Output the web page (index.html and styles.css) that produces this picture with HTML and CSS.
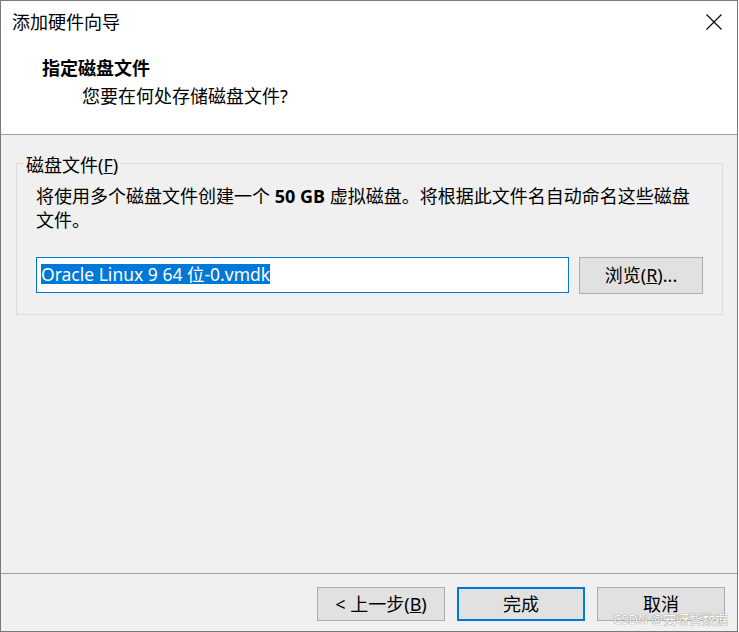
FILE: index.html
```html
<!DOCTYPE html>
<html lang="zh-CN"><head><meta charset="utf-8">
<title>添加硬件向导</title>
<link rel="stylesheet" href="styles.css">
</head><body>
<div class="window">
  <div class="header">
    <div class="titlebar">
      <span class="title">添加硬件向导</span>
      <svg class="close" viewBox="0 0 16 16" width="16" height="16">
        <path d="M0.5 0.5 L15.5 15.5 M15.5 0.5 L0.5 15.5" stroke="#000" stroke-width="1.1" fill="none"/>
      </svg>
    </div>
    <h1>指定磁盘文件</h1>
    <p class="subtitle">您要在何处存储磁盘文件?</p>
  </div>

  <div class="content">
    <fieldset class="group">
      <legend>磁盘文件(<u>F</u>)</legend>
      <p class="desc">将使用多个磁盘文件创建一个 <b>50 GB</b> 虚拟磁盘。将根据此文件名自动命名这些磁盘<br>文件。</p>
      <div class="file-row">
        <div class="field"><span class="sel">Oracle Linux 9 64 位-0.vmdk</span></div>
        <button class="btn browse">浏览(<u>R</u>)...</button>
      </div>
    </fieldset>
  </div>

  <div class="footer">
    <button class="btn">&lt; 上一步(<u>B</u>)</button>
    <button class="btn default">完成</button>
    <button class="btn">取消</button>
  </div>

  <div class="watermark">CSDN @安呀智数据</div>
</div>
</body></html>
```

FILE: styles.css
```css
body {
  margin: 0;
  background: #fff;
  font-family: "Noto Sans", "Noto Sans CJK SC", sans-serif;
  font-size: 18px;
  color: #000;
}
.window {
  position: relative;
  box-sizing: border-box;
  width: 738px;
  height: 632px;
  border: 1px solid #7a7a7a;
  display: flex;
  flex-direction: column;
  background: #f0f0f0;
}
.header {
  flex: none;
  height: 133px;
  background: #fff;
  border-bottom: 1px solid #a0a0a0;
}
.titlebar {
  height: 42px;
  display: flex;
  align-items: center;
  justify-content: space-between;
  padding: 0 15px 0 11px;
}
.title {
  line-height: 24px;
}
.close {
  display: block;
}
h1 {
  margin: 11px 0 0 41px;
  font-size: 18px;
  line-height: 28px;
  font-weight: bold;
}
.subtitle {
  margin: 0 0 0 81px;
  line-height: 28px;
}
.content {
  flex: 1;
  padding: 16px 14px 0 15px;
}
.group {
  margin: 0;
  padding: 9px 19px 20px;
  border: 1px solid #dcdcdc;
}
legend {
  margin-left: -12px;
  padding: 4px 2px 0;
  line-height: 20px;
}
.desc {
  margin: 0;
  line-height: 24px;
}
.file-row {
  display: flex;
  gap: 10px;
  margin-top: 25px;
}
.field {
  box-sizing: border-box;
  width: 533px;
  height: 36px;
  padding: 4px 0 0 4px;
  background: #fff;
  border: 1px solid #0078d7;
  font-size: 17.5px;
}
.sel {
  display: inline-block;
  line-height: 20px;
  background: #0078d7;
  color: #fff;
}
.btn {
  box-sizing: border-box;
  width: 128px;
  height: 34px;
  padding: 0 0 3px;
  font-family: inherit;
  font-size: 18px;
  color: #000;
  background: #e1e1e1;
  border: 1px solid #adadad;
}
.browse {
  width: 124px;
  height: 37px;
}
.footer {
  flex: none;
  height: 58px;
  border-top: 1px solid #a0a0a0;
  display: flex;
  justify-content: flex-end;
  gap: 12px;
  padding: 13px 12px 0 0;
  box-sizing: border-box;
}
.default {
  border: 2px solid #0078d7;
}
.watermark {
  position: absolute;
  right: 9px;
  bottom: 4px;
  font-size: 13px;
  line-height: 16px;
  color: #fff;
  text-shadow: 0 0 1px #777, 0 0 1px #999;
}
```
